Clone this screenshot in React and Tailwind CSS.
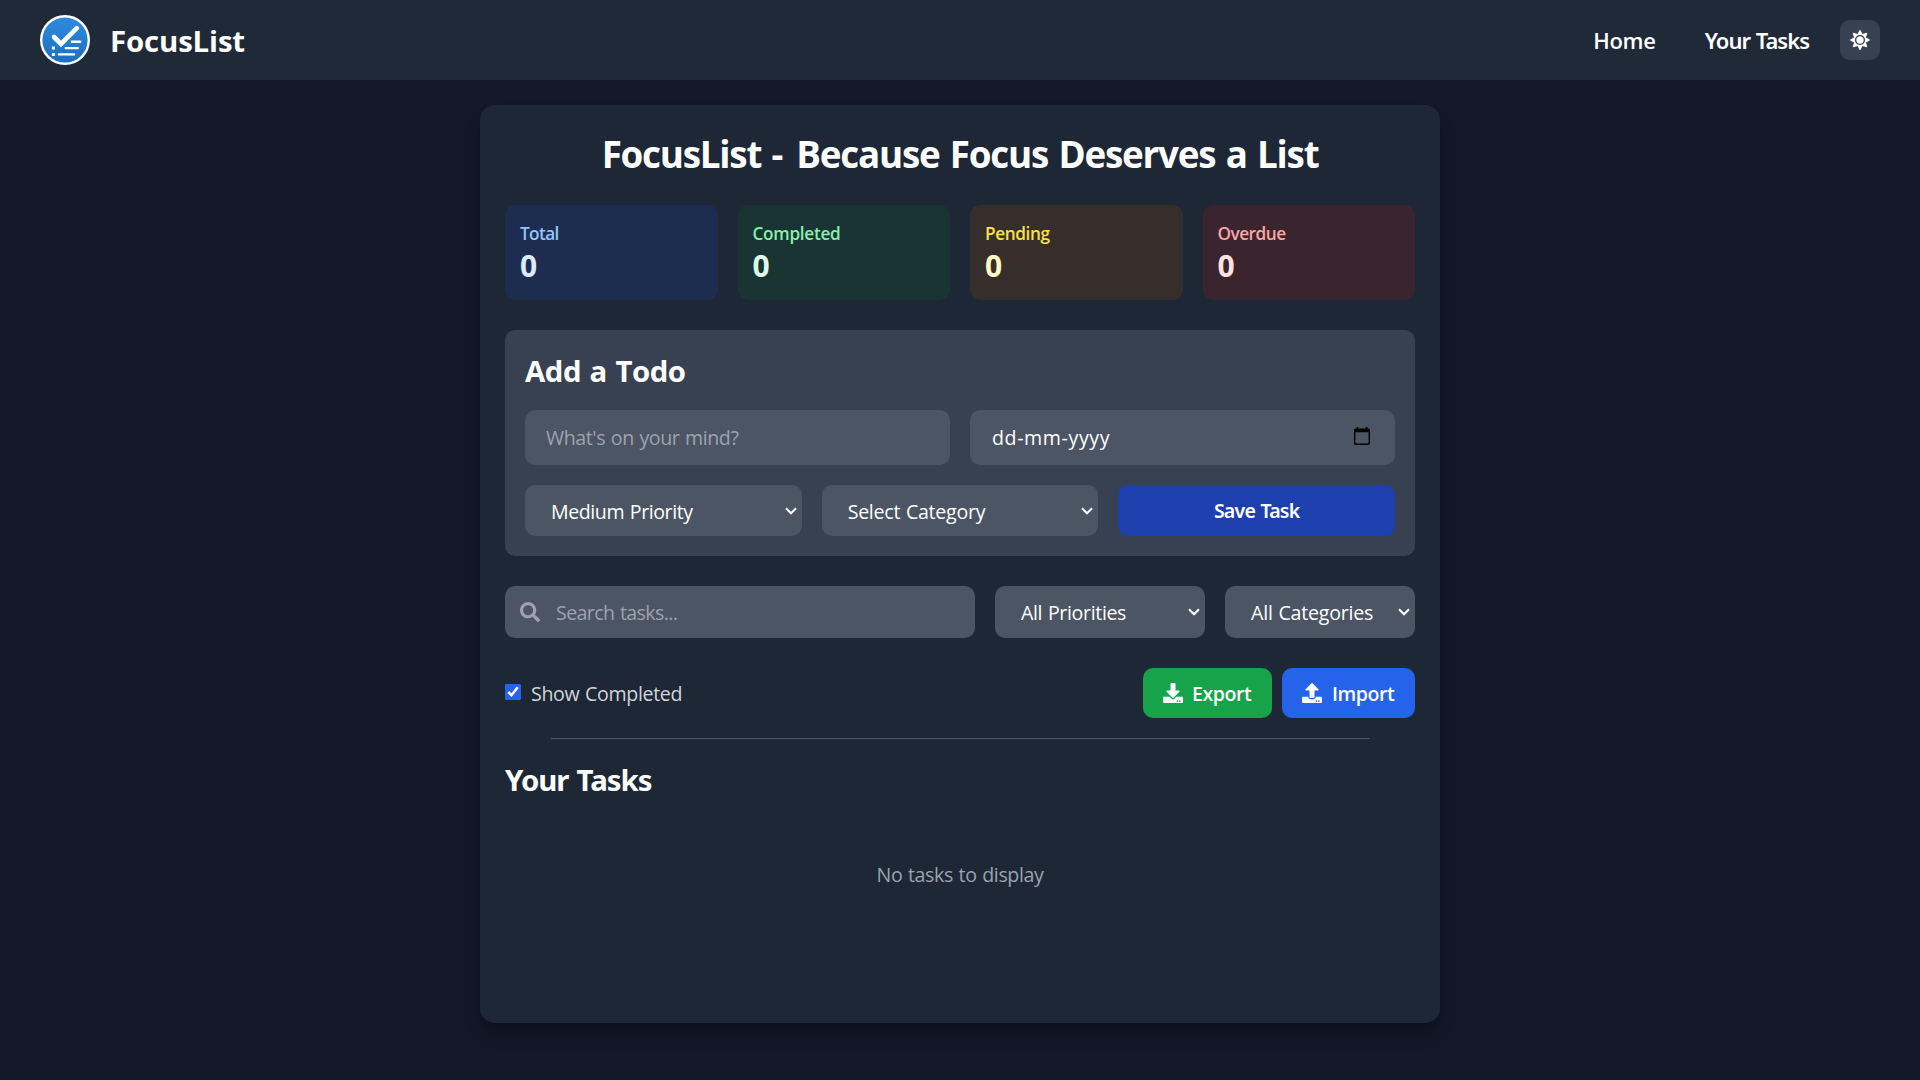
import React from "react";
import { FaSun, FaSearch, FaDownload, FaUpload } from "react-icons/fa";

const stats = [
  { label: "Total", value: 0, box: "bg-[#1e3a8a]/30", text: "text-[#93c5fd] tracking-[-0.6px]", num: "text-[#dbeafe]" },
  { label: "Completed", value: 0, box: "bg-[#14532d]/30", text: "text-[#86efac] tracking-[-0.3px]", num: "text-[#dcfce7]" },
  { label: "Pending", value: 0, box: "bg-[#713f12]/30", text: "text-[#fde047] tracking-[-0.4px]", num: "text-[#fef9c3]" },
  { label: "Overdue", value: 0, box: "bg-[#7f1d1d]/30", text: "text-[#fca5a5] tracking-[-0.5px]", num: "text-[#fee2e2]" },
];

function Logo() {
  return (
    <svg width="50" height="50" viewBox="0 0 50 50" fill="none">
      <defs>
        <linearGradient id="logoFill" x1="0" y1="0" x2="0" y2="1">
          <stop offset="0" stopColor="#2f8be0" />
          <stop offset="1" stopColor="#1a6fc0" />
        </linearGradient>
      </defs>
      <circle cx="25" cy="25" r="23.8" fill="url(#logoFill)" stroke="#fff" strokeWidth="2.4" />
      <path d="M14 22l7 7L36.8 13.2" stroke="#fff" strokeWidth="4.6" strokeLinecap="round" strokeLinejoin="miter" />
      <path d="M31.8 26.7h8.4M25.8 33.1h12M18.9 39.4h15.2" stroke="#fff" strokeWidth="2.4" strokeLinecap="round" />
      <path d="M11.9 31.6h3v3h-3zM11.9 37.9h3v3h-3z" fill="#fff" />
    </svg>
  );
}

function Chevron() {
  return (
    <svg width="12" height="8" viewBox="0 0 12 8" fill="none" className="shrink-0">
      <path d="M1 1.3l5 5 5-5" stroke="#fff" strokeWidth="2" />
    </svg>
  );
}

function Select({ children, className }) {
  return (
    <button className={"flex items-center justify-between rounded-[10px] bg-[#4b5563] pr-[5px] text-left [word-spacing:1px] " + className}>
      <span className="pt-0.5">{children}</span>
      <Chevron />
    </button>
  );
}

function CalendarIcon() {
  return (
    <svg width="16" height="18" viewBox="0 0 16 18" fill="none" className="mb-[3px]">
      <rect x="0.7" y="2.3" width="14.6" height="15" rx="1.2" stroke="#000" strokeWidth="1.4" />
      <path d="M0.7 2h14.6v3.200H0.700zM2.600 0h1.700v2H2.600zM11.700 0h1.700v2h-1.700z" fill="#000" />
    </svg>
  );
}

export default function App() {
  return (
    <div className="flex h-screen flex-col overflow-hidden bg-[#111827] font-['Open_Sans','Noto_Sans',sans-serif] text-[19.6px] leading-[30px] text-white">
      <nav className="flex h-20 shrink-0 items-center justify-between bg-[#1f2937] px-10">
        <div className="flex items-center gap-5">
          <Logo />
          <span className="pt-0.5 text-[29.4px] font-bold leading-10 tracking-[-0.15px]">FocusList</span>
        </div>
        <div className="flex items-center text-[22px] font-semibold leading-[35px]">
          <a className="mr-[49px] tracking-[-0.3px]">Home</a>
          <a className="mr-[31px] tracking-[-1px] [word-spacing:1px] font-['Noto_Sans',sans-serif]">Your Tasks</a>
          <button className="flex size-10 items-center justify-center rounded-[10px] bg-[#374151]">
            <FaSun size={20} />
          </button>
        </div>
      </nav>

      <main className="mx-auto mt-[25px] flex h-[918px] w-[960px] shrink-0 flex-col rounded-[15px] bg-[#1f2937]/90 p-[25px] shadow-[0_12.5px_18.75px_-3.75px_rgba(0,0,0,0.2),0_5px_7.5px_-5px_rgba(0,0,0,0.2)]">
        <h1 className="mb-[28px] pt-0.5 text-center text-[36.8px] font-bold leading-[45px] tracking-[-1.24px] [word-spacing:2.1px]">
          FocusList <span className="tracking-[2.5px]">-</span> Because Focus Deserves a List
        </h1>

        <section className="mb-[30px] grid grid-cols-4 gap-5">
          {stats.map((s) => (
            <div key={s.label} className={"rounded-[10px] px-[15px] pb-[14px] pt-4 " + s.box}>
              <p className={"text-[17.2px] font-semibold leading-[25px] " + s.text}>{s.label}</p>
              <p className={"text-[30px] font-bold leading-10 " + s.num}>{s.value}</p>
            </div>
          ))}
        </section>

        <section className="mb-[30px] rounded-[10px] bg-[#374151] p-5">
          <h2 className="mb-[19px] pt-px text-[29.4px] font-bold leading-10 tracking-[-0.48px] [word-spacing:1.4px]">Add a Todo</h2>
          <div className="mb-5 grid grid-cols-2 gap-5">
            <div className="flex h-[55px] items-center rounded-[10px] bg-[#4b5563] px-[21px] tracking-[-0.42px] text-[#9ca3af] [word-spacing:1px]">
              What's on your mind?
            </div>
            <div className="flex h-[55px] items-center justify-between rounded-[10px] bg-[#4b5563] pl-[22px] pr-[25px] tracking-[0.6px]">
              dd-mm-yyyy
              <CalendarIcon />
            </div>
          </div>
          <div className="grid h-[51px] grid-cols-3 gap-5">
            <Select className="pl-[26px] tracking-[-0.43px]">Medium Priority</Select>
            <Select className="pl-[26px] tracking-[-0.27px]">Select Category</Select>
            <button className="rounded-[10px] bg-[#1e40af] font-semibold tracking-[-0.8px] [word-spacing:1px] font-['Noto_Sans',sans-serif]">
              Save Task
            </button>
          </div>
        </section>

        <section className="mb-[30px] flex h-[52px] gap-5">
          <div className="flex w-[470px] items-center rounded-[10px] bg-[#4b5563] pl-[15px] tracking-[-0.6px] text-[#9ca3af] [word-spacing:1px]">
            <FaSearch size={20} className="mr-4" />
            <span className="pt-0.5">Search tasks...</span>
          </div>
          <Select className="w-[210px] pl-[26px] tracking-[-0.36px]">All Priorities</Select>
          <Select className="w-[190px] pl-[26px] tracking-[-0.22px]">All Categories</Select>
        </section>

        <section className="mb-5 flex h-[50px] items-center justify-between">
          <label className="flex items-center gap-2.5 tracking-[-0.35px] text-[#d1d5db] [word-spacing:1px]">
            <input type="checkbox" defaultChecked className="mb-0.5 size-4 accent-[#2563eb]" />
            <span className="pt-0.5">Show Completed</span>
          </label>
          <div className="flex h-full gap-2.5 font-semibold tracking-[-0.45px]">
            <button className="flex w-[129px] items-center gap-[9px] rounded-[10px] bg-[#16a34a] pl-5">
              <FaDownload size={20} />
              <span className="pt-0.5">Export</span>
            </button>
            <button className="flex w-[133px] items-center gap-2.5 rounded-[10px] bg-[#2563eb] pl-5">
              <FaUpload size={20} />
              <span className="pt-0.5">Import</span>
            </button>
          </div>
        </section>

        <hr className="mx-auto mb-5 w-[819px] border-[#4b5563]" />
        <h2 className="pt-px text-[29.4px] font-bold leading-10 tracking-[-1.02px] [word-spacing:1.5px] font-['Noto_Sans',sans-serif]">
          Your Tasks
        </h2>
        <p className="mt-[60px] text-center tracking-[-0.39px] text-[#9ca3af] [word-spacing:1px]">No tasks to display</p>
      </main>
    </div>
  );
}
